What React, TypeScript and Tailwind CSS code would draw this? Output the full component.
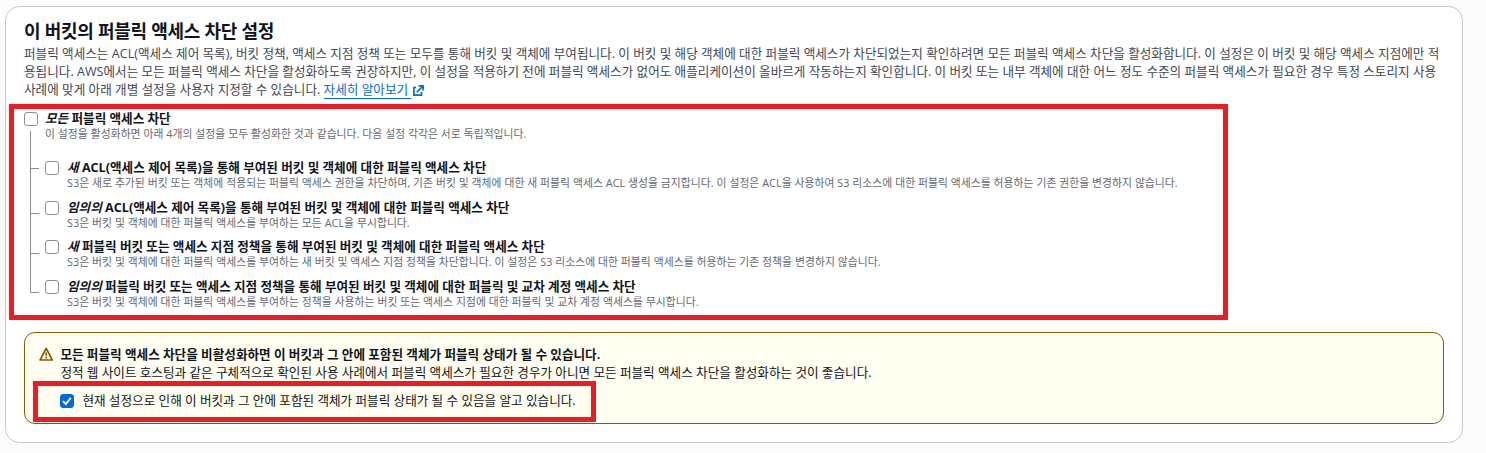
import type { ReactNode } from 'react';

interface Setting {
  prefix: string;
  label: string;
  desc: string;
  rowClass: string;
}

const SETTINGS: Setting[] = [
  {
    prefix: '새',
    label: 'ACL(액세스 제어 목록)을 통해 부여된 버킷 및 객체에 대한 퍼블릭 액세스 차단',
    desc: 'S3은 새로 추가된 버킷 또는 객체에 적용되는 퍼블릭 액세스 권한을 차단하며, 기존 버킷 및 객체에 대한 새 퍼블릭 액세스 ACL 생성을 금지합니다. 이 설정은 ACL을 사용하여 S3 리소스에 대한 퍼블릭 액세스를 허용하는 기존 권한을 변경하지 않습니다.',
    rowClass: 'h-10',
  },
  {
    prefix: '임의의',
    label: 'ACL(액세스 제어 목록)을 통해 부여된 버킷 및 객체에 대한 퍼블릭 액세스 차단',
    desc: 'S3은 버킷 및 객체에 대한 퍼블릭 액세스를 부여하는 모든 ACL을 무시합니다.',
    rowClass: 'h-[39px]',
  },
  {
    prefix: '새',
    label: '퍼블릭 버킷 또는 액세스 지점 정책을 통해 부여된 버킷 및 객체에 대한 퍼블릭 액세스 차단',
    desc: 'S3은 버킷 및 객체에 대한 퍼블릭 액세스를 부여하는 새 버킷 및 액세스 지점 정책을 차단합니다. 이 설정은 S3 리소스에 대한 퍼블릭 액세스를 허용하는 기존 정책을 변경하지 않습니다.',
    rowClass: 'h-10',
  },
  {
    prefix: '임의의',
    label: '퍼블릭 버킷 또는 액세스 지점 정책을 통해 부여된 버킷 및 객체에 대한 퍼블릭 및 교차 계정 액세스 차단',
    desc: 'S3은 버킷 및 객체에 대한 퍼블릭 액세스를 부여하는 정책을 사용하는 버킷 또는 액세스 지점에 대한 퍼블릭 및 교차 계정 액세스를 무시합니다.',
    rowClass: 'h-9',
  },
];

// one elbow of the tree per child setting
const BRANCHES = ['h-[38px]', 'h-[45px]', 'h-10', 'h-[39px]'];

function Checkbox({ checked = false }: { checked?: boolean }) {
  return (
    <span
      role="checkbox"
      aria-checked={checked}
      className={`mt-[3px] flex size-3.5 shrink-0 items-center justify-center rounded-[3px] border ${
        checked ? 'border-[#006ce0] bg-[#006ce0]' : 'border-[#8c8c94] bg-white'
      }`}
    >
      {checked && (
        <svg viewBox="0 0 14 14" className="size-3.5 shrink-0" fill="none" stroke="white" strokeWidth="1.9">
          <path d="M3 7.2 5.8 10 10.8 3.9" />
        </svg>
      )}
    </span>
  );
}

function SettingText({ prefix, label, desc }: Omit<Setting, 'rowClass'>) {
  return (
    <div className="whitespace-nowrap">
      <p className="h-[18px] text-[12.6px] leading-5 font-bold text-[#0f141a]">
        <i>{prefix}</i> {label}
      </p>
      <p className="text-[10.8px] leading-[14px] tracking-[0.005em] text-[#656871]">{desc}</p>
    </div>
  );
}

function ExternalLink({ children }: { children: ReactNode }) {
  return (
    <a href="#" className="text-[#006ce0]">
      <span className="border-b border-[#006ce0]">{children}&nbsp;</span>
      <svg viewBox="0 0 11 11" className="ml-0.5 inline size-[11px] align-[-2px]" fill="none" stroke="currentColor" strokeWidth="1.7">
        <path d="M5.5 0.9h4.6v4.6M10 1 3.8 7.2M3 2.5H0.9v7.6h7.6V7" />
      </svg>
    </a>
  );
}

export default function App() {
  return (
    <main className="relative h-[453px] overflow-hidden bg-[#fcfcfd] pt-1.5 pl-[5px] font-['Open_Sans','Noto_Sans_CJK_KR',sans-serif]">
      <section className="h-[437px] w-[1458px] rounded-[14.4px] border border-[#c6c6cd] bg-white px-[18px] pt-3.5">
        <h2 className="h-6 text-lg leading-[21px] font-bold tracking-[-0.015em] text-[#0f141a]">이 버킷의 퍼블릭 액세스 차단 설정</h2>
        <div className="text-[12.6px] leading-[18px] tracking-[0.011px] whitespace-nowrap text-[#424650]">
          <p className="h-[18px]">
            퍼블릭 액세스는 ACL(액세스 제어 목록), 버킷 정책, 액세스 지점 정책 또는 모두를 통해 버킷 및 객체에 부여됩니다. 이 버킷 및 해당 객체에 대한 퍼블릭 액세스가 차단되었는지 확인하려면 모든 퍼블릭 액세스 차단을 활성화합니다. 이 설정은 이 버킷 및 해당 액세스 지점에만 적
          </p>
          <p className="h-[18px]">
            용됩니다. AWS에서는 모든 퍼블릭 액세스 차단을 활성화하도록 권장하지만, 이 설정을 적용하기 전에 퍼블릭 액세스가 없어도 애플리케이션이 올바르게 작동하는지 확인합니다. 이 버킷 또는 내부 객체에 대한 어느 정도 수준의 퍼블릭 액세스가 필요한 경우 특정 스토리지 사용
          </p>
          <p className="h-[18px]">
            사례에 맞게 아래 개별 설정을 사용자 지정할 수 있습니다. <ExternalLink>자세히 알아보기</ExternalLink>
          </p>
        </div>

        <div className="mt-2.5 flex h-[22px] gap-[7px]">
          <Checkbox />
          <SettingText
            prefix="모든"
            label="퍼블릭 액세스 차단"
            desc="이 설정을 활성화하면 아래 4개의 설정을 모두 활성화한 것과 같습니다. 다음 설정 각각은 서로 독립적입니다."
          />
        </div>

        <div className="flex h-[201px] pl-1.5">
          <div className="w-[15px] shrink-0">
            {BRANCHES.map((height, i) => (
              <div key={i} className={`w-[9px] border-b border-l border-[#8c8c94] ${height}`} />
            ))}
          </div>
          <div className="pt-[27px]">
            {SETTINGS.map(({ rowClass, ...setting }, i) => (
              <div key={i} className={`flex gap-2 ${rowClass}`}>
                <Checkbox />
                <SettingText {...setting} />
              </div>
            ))}
          </div>
        </div>

        <div className="flex h-[92px] gap-[7px] rounded-[10.8px] border border-[#855900] bg-[#fffef0] pt-[13px] pl-3.5 text-[12.6px] leading-[18px] whitespace-nowrap text-[#0f141a]">
          <svg viewBox="0 0 14.4 14.4" className="mt-[0.5px] size-[14.4px] shrink-0 text-[#855900]" fill="none" stroke="currentColor" strokeWidth="1.7">
            <path d="M7.2 1.4 13.3 13H1.1L7.2 1.4Z" strokeLinejoin="round" />
            <path d="M7.2 5.4v3.4M7.2 9.8v1.7" />
          </svg>
          <div className="tracking-[0.011px]">
            <p className="font-bold">모든 퍼블릭 액세스 차단을 비활성화하면 이 버킷과 그 안에 포함된 객체가 퍼블릭 상태가 될 수 있습니다.</p>
            <p>정적 웹 사이트 호스팅과 같은 구체적으로 확인된 사용 사례에서 퍼블릭 액세스가 필요한 경우가 아니면 모든 퍼블릭 액세스 차단을 활성화하는 것이 좋습니다.</p>
            <div className="mt-[9px] flex h-5 gap-2">
              <Checkbox checked />
              <span className="leading-5">현재 설정으로 인해 이 버킷과 그 안에 포함된 객체가 퍼블릭 상태가 될 수 있음을 알고 있습니다.</span>
            </div>
          </div>
        </div>
      </section>

      {/* highlight frames over the settings and the acknowledgement */}
      <div className="pointer-events-none absolute top-[104px] left-[9px] h-[216px] w-[1219px] border-5 border-[#ed1c24]" />
      <div className="pointer-events-none absolute top-[381px] left-[33px] h-[41px] w-[563px] border-5 border-[#ed1c24]" />
    </main>
  );
}
